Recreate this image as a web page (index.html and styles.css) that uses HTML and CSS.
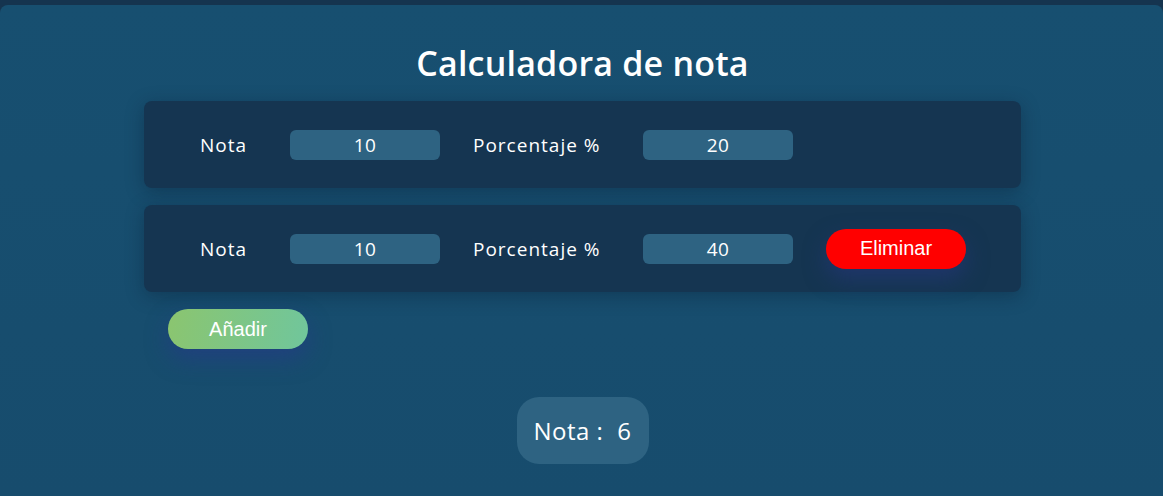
FILE: index.html
```html
<!DOCTYPE html>
<html lang="es">
<head>
<meta charset="utf-8">
<title>Calculadora de nota</title>
<link rel="stylesheet" href="styles.css">
</head>
<body>
<main class="app">
  <h1 class="title">Calculadora de nota</h1>
  <section class="rows">
    <div class="row">
      <label class="label label-nota">Nota</label>
      <input class="field" type="text" value="10">
      <label class="label label-pct">Porcentaje %</label>
      <input class="field" type="text" value="20">
    </div>
    <div class="row">
      <label class="label label-nota">Nota</label>
      <input class="field" type="text" value="10">
      <label class="label label-pct">Porcentaje %</label>
      <input class="field" type="text" value="40">
      <button class="btn btn-delete">Eliminar</button>
    </div>
  </section>
  <div class="actions">
    <button class="btn btn-add">Añadir</button>
  </div>
  <div class="result-wrap">
    <div class="result"><span>Nota :</span><span>6</span></div>
  </div>
</main>
</body>
</html>
```
FILE: styles.css
```css
* { box-sizing: border-box; }
html, body { height: 100%; }
body {
  margin: 0;
  background: #15344f;
  font-family: "Open Sans", "DejaVu Sans", sans-serif;
  color: #ffffff;
  overflow: hidden;
}
.app {
  margin-top: 5px;
  height: 491px;
  background: linear-gradient(180deg, #174f70 0%, #174c6d 100%);
  border-radius: 8px 8px 0 0;
  padding: 36px 0 0 2px;
}
.title {
  margin: 0;
  text-align: center;
  font-size: 34px;
  font-weight: 600;
  line-height: 44px;
  letter-spacing: 0.2px;
}
.rows {
  width: 877px;
  margin: 16px auto 0;
  display: flex;
  flex-direction: column;
  gap: 17px;
}
.row {
  height: 87px;
  background: #153551;
  border-radius: 8px;
  box-shadow: 0 4px 18px rgba(10, 25, 45, 0.35);
  display: flex;
  align-items: center;
  padding-left: 56px;
}
.label {
  font-size: 19px;
  line-height: 24px;
  letter-spacing: 1px;
}
.label-nota { width: 90px; }
.label-pct { width: 170px; margin-left: 33px; }
.field {
  width: 150px;
  height: 30px;
  border: none;
  border-radius: 6px;
  background: #2e6382;
  color: #ffffff;
  text-align: center;
  font-family: "Open Sans", "DejaVu Sans", sans-serif;
  font-size: 19px;
  letter-spacing: 0.5px;
  outline: none;
  padding: 0;
}
.btn {
  width: 140px;
  height: 40px;
  border: none;
  border-radius: 20px;
  color: #ffffff;
  font-family: "Liberation Sans", Arial, sans-serif;
  font-size: 20px;
  cursor: pointer;
}
.btn-delete {
  margin-left: 33px;
  background: #ff0000;
  box-shadow: 0 10px 22px rgba(40, 55, 130, 0.55);
}
.actions {
  width: 877px;
  margin: 17px auto 0;
  padding-left: 24px;
}
.btn-add {
  background: linear-gradient(100deg, #8bc56f 0%, #70c69c 100%);
  box-shadow: 0 10px 22px rgba(40, 55, 140, 0.55);
}
.result-wrap {
  display: flex;
  justify-content: center;
  margin-top: 48px;
}
.result {
  height: 67px;
  padding: 0 16px;
  min-width: 132px;
  border-radius: 22px;
  background: #2e6382;
  display: flex;
  align-items: center;
  justify-content: center;
  gap: 14px;
  font-size: 24px;
  letter-spacing: 0.5px;
}
```
